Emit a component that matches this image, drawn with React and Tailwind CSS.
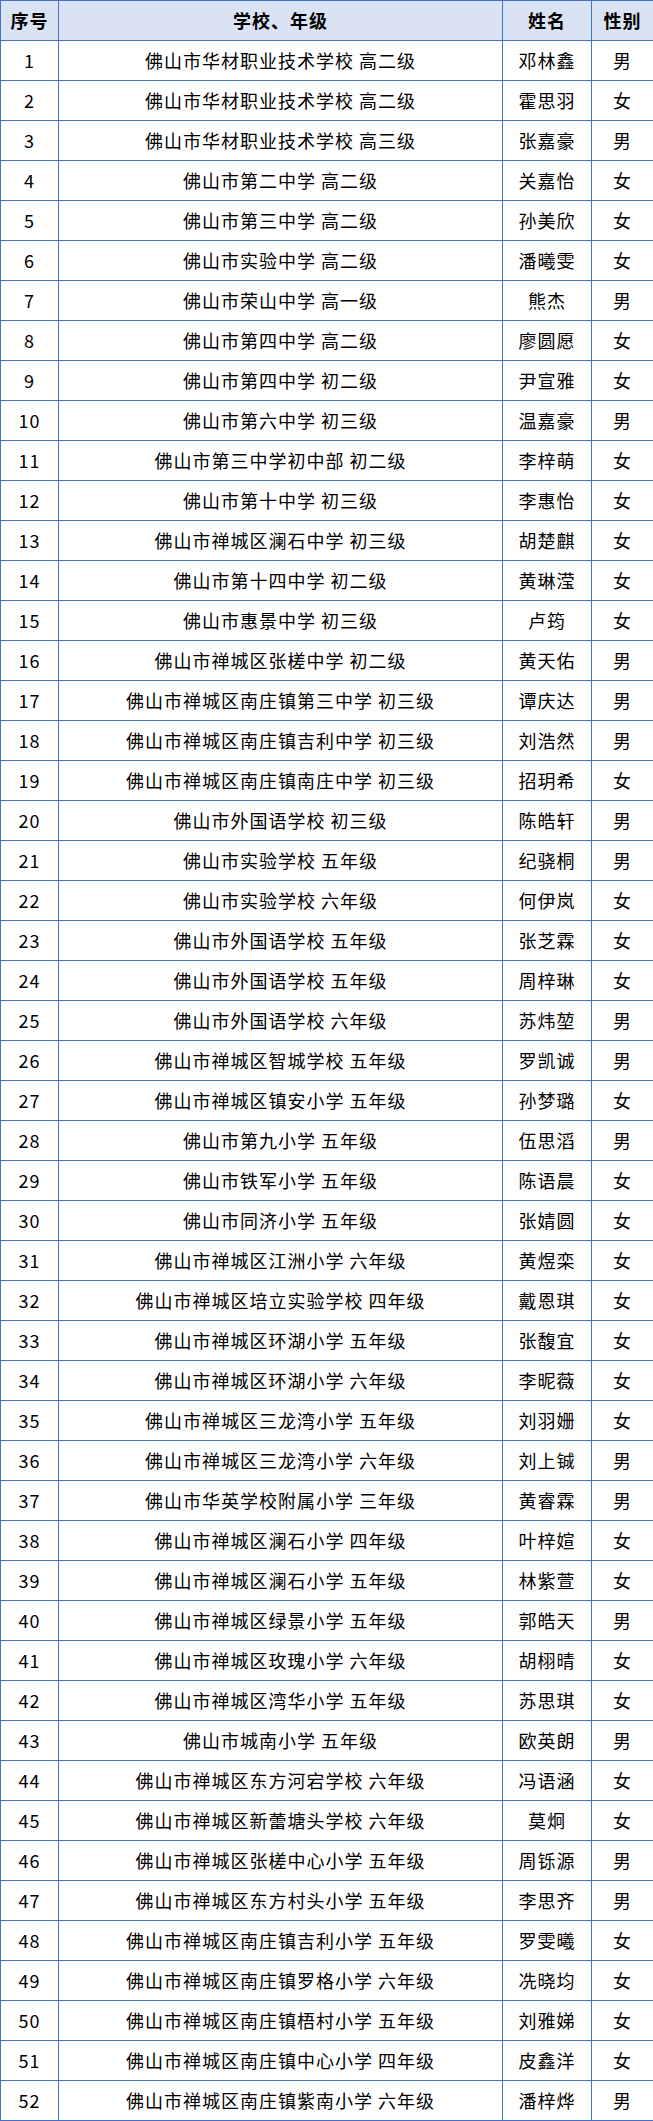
import React from "react";

const rows = [
  ["佛山市华材职业技术学校 高二级", "邓林鑫", "男"],
  ["佛山市华材职业技术学校 高二级", "霍思羽", "女"],
  ["佛山市华材职业技术学校 高三级", "张嘉豪", "男"],
  ["佛山市第二中学 高二级", "关嘉怡", "女"],
  ["佛山市第三中学 高二级", "孙美欣", "女"],
  ["佛山市实验中学 高二级", "潘曦雯", "女"],
  ["佛山市荣山中学 高一级", "熊杰", "男"],
  ["佛山市第四中学 高二级", "廖圆愿", "女"],
  ["佛山市第四中学 初二级", "尹宣雅", "女"],
  ["佛山市第六中学 初三级", "温嘉豪", "男"],
  ["佛山市第三中学初中部 初二级", "李梓萌", "女"],
  ["佛山市第十中学 初三级", "李惠怡", "女"],
  ["佛山市禅城区澜石中学 初三级", "胡楚麒", "女"],
  ["佛山市第十四中学 初二级", "黄琳滢", "女"],
  ["佛山市惠景中学 初三级", "卢�londontbd", "女"],
  ["佛山市禅城区张槎中学 初二级", "黄天佑", "男"],
  ["佛山市禅城区南庄镇第三中学 初三级", "谭庆达", "男"],
  ["佛山市禅城区南庄镇吉利中学 初三级", "刘浩然", "男"],
  ["佛山市禅城区南庄镇南庄中学 初三级", "招玥希", "女"],
  ["佛山市外国语学校 初三级", "陈皓轩", "男"],
  ["佛山市实验学校 五年级", "纪骁桐", "男"],
  ["佛山市实验学校 六年级", "何伊岚", "女"],
  ["佛山市外国语学校 五年级", "张芝霖", "女"],
  ["佛山市外国语学校 五年级", "周梓琳", "女"],
  ["佛山市外国语学校 六年级", "苏炜堃", "男"],
  ["佛山市禅城区智城学校 五年级", "罗凯诚", "男"],
  ["佛山市禅城区镇安小学 五年级", "孙梦璐", "女"],
  ["佛山市第九小学 五年级", "伍思滔", "男"],
  ["佛山市铁军小学 五年级", "陈语晨", "女"],
  ["佛山市同济小学 五年级", "张婧圆", "女"],
  ["佛山市禅城区江洲小学 六年级", "黄煜栾", "女"],
  ["佛山市禅城区培立实验学校 四年级", "戴恩琪", "女"],
  ["佛山市禅城区环湖小学 五年级", "张馥宜", "女"],
  ["佛山市禅城区环湖小学 六年级", "李昵薇", "女"],
  ["佛山市禅城区三龙湾小学 五年级", "刘羽姗", "女"],
  ["佛山市禅城区三龙湾小学 六年级", "刘上铖", "男"],
  ["佛山市华英学校附属小学 三年级", "黄睿霖", "男"],
  ["佛山市禅城区澜石小学 四年级", "叶梓媗", "女"],
  ["佛山市禅城区澜石小学 五年级", "林紫萱", "女"],
  ["佛山市禅城区绿景小学 五年级", "郭皓天", "男"],
  ["佛山市禅城区玫瑰小学 六年级", "胡栩晴", "女"],
  ["佛山市禅城区湾华小学 五年级", "苏思琪", "女"],
  ["佛山市城南小学 五年级", "欧英朗", "男"],
  ["佛山市禅城区东方河宕学校 六年级", "冯语涵", "女"],
  ["佛山市禅城区新蕾塘头学校 六年级", "莫炯", "女"],
  ["佛山市禅城区张槎中心小学 五年级", "周铄源", "男"],
  ["佛山市禅城区东方村头小学 五年级", "李思齐", "男"],
  ["佛山市禅城区南庄镇吉利小学 五年级", "罗雯曦", "女"],
  ["佛山市禅城区南庄镇罗格小学 六年级", "冼晓均", "女"],
  ["佛山市禅城区南庄镇梧村小学 五年级", "刘雅娣", "女"],
  ["佛山市禅城区南庄镇中心小学 四年级", "皮鑫洋", "女"],
  ["佛山市禅城区南庄镇紫南小学 六年级", "潘梓烨", "男"],
];
rows[14][1] = "卢筠";

const font = { fontFamily: '"Noto Sans CJK SC", "Noto Sans", sans-serif' };

export default function App() {
  return (
    <div className="w-[653px] bg-white text-black" style={font}>
      <table className="w-[653px] border-collapse table-fixed text-[18px] tracking-[1px]">
        <colgroup>
          <col className="w-[58px]" />
          <col className="w-[444px]" />
          <col className="w-[89px]" />
          <col className="w-[62px]" />
        </colgroup>
        <thead>
          <tr className="h-[40px] bg-[#dae3f3] font-bold">
            <th className="border border-[#4472c4] p-0 text-center">序号</th>
            <th className="border border-[#4472c4] p-0 text-center">学校、年级</th>
            <th className="border border-[#4472c4] p-0 text-center">姓名</th>
            <th className="border border-[#4472c4] p-0 text-center">性别</th>
          </tr>
        </thead>
        <tbody>
          {rows.map((r, i) => (
            <tr key={i} className="h-[40px]">
              <td className="border border-[#4472c4] p-0 text-center">{i + 1}</td>
              <td className="border border-[#4472c4] p-0 text-center">{r[0]}</td>
              <td className="border border-[#4472c4] p-0 text-center">{r[1]}</td>
              <td className="border border-[#4472c4] p-0 text-center">{r[2]}</td>
            </tr>
          ))}
        </tbody>
      </table>
    </div>
  );
}
